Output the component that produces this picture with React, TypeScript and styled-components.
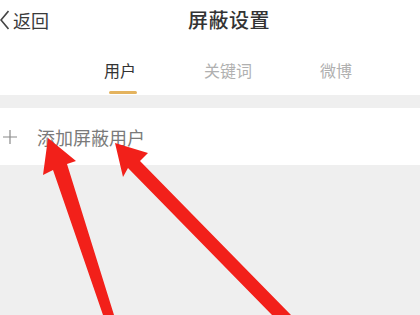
import React from "react";
import styled, { createGlobalStyle } from "styled-components";

const Global = createGlobalStyle`
  html, body { margin: 0; padding: 0; background: #efefef; }
  body { font-family: "Noto Sans CJK SC", "Noto Sans", sans-serif; }
`;

const Page = styled.div`
  position: relative;
  width: 420px;
  height: 315px;
  overflow: hidden;
  background: #efefef;
`;

const Header = styled.div`
  height: 40px;
  background: #fff;
  display: flex;
  align-items: center;
`;

const Back = styled.div`
  display: flex;
  align-items: center;
  gap: 4px;
  width: 49px;
  color: #3a3a3a;
  font-size: 18px;
  line-height: 1;
`;

const Title = styled.div`
  margin-left: 139px;
  font-size: 20px;
  line-height: 1;
  font-weight: 500;
  color: #333;
  letter-spacing: 0.5px;
`;

const Tabs = styled.div`
  height: 55px;
  background: #fff;
  display: flex;
  padding-left: 66px;
`;

const Tab = styled.div<{ $active?: boolean }>`
  width: 108px;
  display: flex;
  flex-direction: column;
  align-items: center;
  padding-top: 22px;
  font-size: 16px;
  line-height: 16px;
  color: ${(p) => (p.$active ? "#333" : "#b0b0b0")};
`;

const Underline = styled.div`
  margin-top: 13px;
  margin-left: 5px;
  width: 28px;
  height: 3px;
  border-radius: 1.5px;
  background: #e4b35e;
`;

const AddRow = styled.div`
  margin-top: 13px;
  height: 57px;
  background: #fff;
  display: flex;
  align-items: center;
  padding-left: 3px;
  gap: 20px;
`;

const AddText = styled.span`
  font-size: 18px;
  line-height: 1;
  color: #7a7a7a;
`;

const Overlay = styled.svg`
  position: absolute;
  left: 0;
  top: 0;
  pointer-events: none;
`;

export default function App() {
  return (
    <Page>
      <Global />
      <Header>
        <Back>
          <svg width="9" height="20" viewBox="0 0 9 20">
            <polyline points="8.5,1 1,10 8.5,19" fill="none" stroke="#444" strokeWidth="1.6" />
          </svg>
          <span>返回</span>
        </Back>
        <Title>屏蔽设置</Title>
      </Header>
      <Tabs>
        <Tab $active>
          用户
          <Underline />
        </Tab>
        <Tab>关键词</Tab>
        <Tab>微博</Tab>
      </Tabs>
      <AddRow>
        <svg width="14" height="14" viewBox="0 0 14 14">
          <path d="M7 0V14M0 7H14" stroke="#8a8a8a" strokeWidth="1.2" />
        </svg>
        <AddText>添加屏蔽用户</AddText>
      </AddRow>
      <Overlay width="420" height="315" viewBox="0 0 420 315">
        <polygon
          points="48,138 76,161 67,164 114,315 103,315 53,170 43,175"
          fill="#f2201a"
        />
        <polygon
          points="115,143 148,153 140,161 291,315 272,315 128,168 123,177"
          fill="#f2201a"
        />
      </Overlay>
    </Page>
  );
}
